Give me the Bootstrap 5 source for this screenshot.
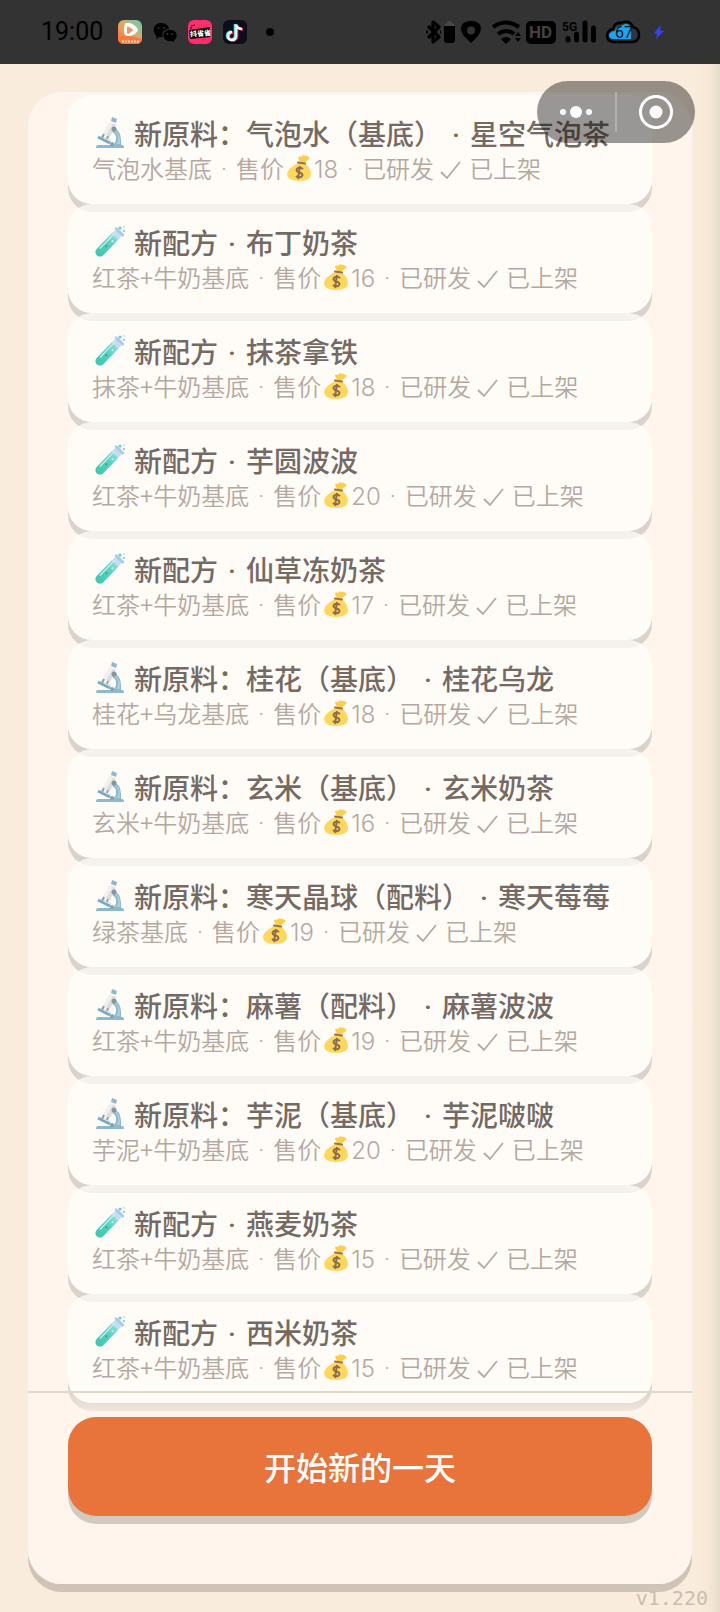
<!DOCTYPE html>
<html lang="zh-CN">
<head>
<meta charset="utf-8">
<meta name="viewport" content="width=device-width, initial-scale=1">
<title>奶茶店</title>
<link rel="stylesheet" href="https://cdn.jsdelivr.net/npm/bootstrap@5.3.0/dist/css/bootstrap.min.css">
<style>
body{background:#faecdc;font-family:"Noto Sans CJK SC",sans-serif;color:#756a63}
.statusbar{background:#333;height:64px;padding:0 55px 0 41px;gap:11px;color:#000}
.clock{font:25px/24px Roboto,sans-serif;width:66px;white-space:nowrap}
.stage{padding:28px;background:linear-gradient(to left,#e6dac8 0,#f3e5d3 8px,#f8e9d8 16px,#faecdc 28px)}
.panel{background:#fff5ec;border-radius:34px;box-shadow:0 8px #cfc3b8}
.recipes{padding:3px 40px 0}
.recipe{background:rgba(255,255,253,.7);border-radius:24px;box-shadow:0 8px #dad2cb;padding:20px 24px 19px;white-space:nowrap}
.recipe h2{font-size:28px;line-height:36px;font-weight:500;gap:8px}
.recipe p{font-size:24px;line-height:34px;height:34px;font-weight:350;color:#b5a8a0}
.dot-lg,.dot-sm{display:inline-block;text-align:center;font-family:Roboto,sans-serif;line-height:1}
.dot-lg{width:28px}
.dot-sm{width:24px}
.price{font-family:Inter,sans-serif;line-height:1}
.bag{width:30px;height:28px;vertical-align:-4px}
.tick{width:35px;height:24px;vertical-align:-4px}
.dock{margin-top:-12px;padding:24px 40px 68px;border-top:2px solid #e3d6cb;background:linear-gradient(rgba(255,245,236,.1),rgba(255,245,236,.6) 20px,#fff5ec 24px);border-radius:0 0 34px 34px}
.start{background:#e8743b;color:#fff;border:0;border-radius:28px;box-shadow:0 8px #d2cac1;font-size:32px;line-height:48px;font-weight:500;padding:25px 0 26px}
.start:hover{background:#e8743b;color:#fff}
.capsule{top:17px;right:25px;width:158px;height:62px;border-radius:31px;background:rgba(0,0,0,.4)}
.capsule button{background:none;border:0;padding:0;width:78px}
.capsule svg{display:block;margin:auto}
.rule{width:2px;height:40px;background:rgba(255,255,255,.25)}
.version{right:12px;bottom:2px;font:20px/24px "DejaVu Sans Mono",monospace;color:#c9beb2}
</style>
</head>
<body>
<svg width="0" height="0" class="position-absolute" aria-hidden="true">
<defs>
<linearGradient id="gl" x2="0" y2="1"><stop stop-color="#83ddd5"/><stop offset=".4" stop-color="#56d0bf"/><stop offset="1" stop-color="#3cc9ac"/></linearGradient>
<symbol id="scope" viewBox="0 0 34 34"><path d="M20 11q9 3 9 13v5h1q2 0 2 3H4q0-3 2-3h12q5 0 6-5 1-6-4-8z" fill="#8cb9cc"/><path d="M22 13q6 4 6 11v4h-4q2-2 2-6 0-5-4-7z" fill="#a9cfdf"/><path d="M6 21l12 6" stroke="#73a9c1" stroke-width="3"/><path d="M8 20l11 5" stroke="#cfe8f0" stroke-width="1.500"/><path d="M18 6l6 3-6 12-7-3z" fill="#dcdddd"/><path d="M18 6l3 1.500-7 12-3-1.500z" fill="#f0f0f0"/><path d="M20 1l5 2-1 4-5-2z" fill="#90b8cb"/><path d="M12 18l-2 4M16 20l-1 3" stroke="#9a9da0" stroke-width="2"/><circle cx="22" cy="13" r="2.500" fill="#8695a0"/><circle cx="20" cy="28" r="2" fill="#8c9ca8"/></symbol>
<symbol id="tube" viewBox="0 0 34 34"><g transform="rotate(44 17 17)"><rect x="13" y="1" width="9" height="34" rx="4.500" fill="#c5dcf3"/><path d="M13 9h9v21.500a4.500 4.500 0 0 1-9 0z" fill="url(#gl)"/><rect x="11.500" y="1" width="12" height="3" rx="1.500" fill="#a7cdec"/><path d="M15 7v21" stroke="#c8f6ea" stroke-width="1.200"/><circle cx="19" cy="14" r="1" fill="#caf5ea"/><circle cx="18" cy="22" r="1" fill="#26a58c"/></g><circle cx="28" cy="3" r="1.500" fill="#66cfc0"/><circle cx="32" cy="6" r="1" fill="#66cfc0"/><circle cx="32" cy="2" r=".8" fill="#89d8cf"/></symbol>
<symbol id="bag" viewBox="0 0 30 28"><path d="M16 8q-2-3-2-5 2-1 3 0 2-3 4-1 2-1 3 1 2-1 1 2l-5 4z" fill="#ffcd48"/><path d="M14 9h7q6 6 6 11 0 7-12 7T3 20q0-5 11-11z" fill="#ffd75b"/><path d="M14 8.500l7 1" stroke="#967555" stroke-width="2" stroke-linecap="round"/><path d="M19 15q-2-2-5-1-3 2 0 4l3 1q3 2 0 4-3 1-5-1M16 12l-2 13" stroke="#8a6d52" stroke-width="2" fill="none"/></symbol>
<symbol id="tick" viewBox="0 0 35 24"><path d="M7 14l6 6L26 4" fill="none" stroke="#b5a8a0" stroke-width="1.800"/></symbol>
</defs>
</svg>

<header class="statusbar d-flex align-items-center">
<span class="clock">19:00</span>
<svg width="24" height="24" viewBox="0 0 24 24"><defs><linearGradient id="o" y2="1" x2="0" x1="1"><stop stop-color="#55d5ba"/><stop offset=".5" stop-color="#e9a565"/><stop offset="1" stop-color="#ff6c28"/></linearGradient></defs><rect width="24" height="24" rx="6" fill="url(#o)"/><path d="M0 17q12-3 24 2v1q-1 4-6 4H6q-6 0-6-6z" fill="#ff793b"/><path d="M8 3h4q7 3 8 7-2 5-9 6-6 0-5-6 0-6 2-7z" fill="#fff"/><path d="M10 7.500l4 2.500-4 3z" fill="#ee9858" stroke="#ee9858" stroke-width="2" stroke-linejoin="round"/><path d="M4 21.500h17" stroke="#ffe3cf" stroke-width="2" stroke-dasharray="2 1"/></svg>
<svg width="24" height="24" viewBox="0 0 24 24"><path d="M8 3c5 0 8 3 8 6-5 0-8 4-6 8l-4 0-3 2 .500-3C-2 11 1 3 8 3zM17 10c8 0 8 8 4 10l.500 2-3-1c-6 1-8-3-8-6s3-5 6.500-5z"/><g fill="#333"><circle cx="5.500" cy="8" r="1"/><circle cx="11" cy="8" r="1"/><circle cx="14.500" cy="14" r="1"/><circle cx="19" cy="14" r="1"/></g></svg>
<svg width="24" height="24" viewBox="0 0 24 24"><rect width="24" height="24" rx="6" fill="#fe2d6c"/><path d="M1 10l21-3v10L2 19z"/><path d="M3 6l4-1M3 9V7" stroke="#111"/><text x="2" y="16" font-size="7" font-weight="900" fill="#fff" transform="rotate(-4 12 13)">抖省省</text></svg>
<svg width="24" height="24" viewBox="0 0 24 24"><rect width="24" height="24" rx="6" fill="#0c0d18"/><g fill="none" stroke-width="2.600"><path d="M12 4v11.500a4 4 0 1 1-4-4M12 4q1 4 6 4.500" stroke="#25e5e0"/><path d="M14 5v11.500a4 4 0 1 1-4-4M14 5q1 4 6 4.500" stroke="#fe2d55"/><path d="M13 4.500v11.500a4 4 0 1 1-4-4M13 4.500q1 4 6 4.500" stroke="#fff"/></g></svg>
<svg width="24" height="24" viewBox="0 0 24 24"><circle cx="12" cy="12" r="4"/></svg>
<svg class="ms-auto" width="240" height="26" viewBox="426 19 240 26" font-family="Roboto,sans-serif">
<path d="M429 26l11 11-6 5V22l6 5-11 11M427 32h2M441 32h1" fill="none" stroke="#000" stroke-width="3.200" stroke-linejoin="round"/>
<path d="M445 26h11v14q0 3-3 3h-5q-3 0-3-3z"/><path d="M445 26q0-2 3-3 0-2 2.500-2t2.500 2q3 1 3 3z" fill="#484848"/>
<path fill-rule="evenodd" d="M472 21c12 0 12 10 6 16l-6 6-6-6c-6-6-6-16 6-16zm0 5.500a4 4 0 1 0 0 8 4 4 0 0 0 0-8z"/>
<g fill="none" stroke="#000" stroke-width="4"><path d="M494 27q13-9 26 0M499 34q8-6 16 0"/></g><path d="M502 39q5-4 10 0l-5 5zM516 36l3-4 3 4zM516 38h6l-3 4z"/>
<rect x="527" y="21" width="30" height="23" rx="5"/><text x="530" y="38" font-size="17" font-weight="700" fill="#444">HD</text>
<text x="563" y="31" font-size="12" font-weight="700">5G</text><g stroke="#000" stroke-width="5" stroke-linecap="round"><path d="M569 38.500v1.500M577.500 34v6M586 23v17M594.500 28v12"/></g>
<path d="M614 42q-6-1-6-7 1-5 6-6 2-7 8-6 8-4 12 4 7 2 6 9-1 6-7 6z" fill="#333" stroke="#000" stroke-width="2.500"/><path d="M614 39q-4-1-4-4 1-4 6-4 1-5 6-5l4-2q6 0 6 5v10z" fill="#17a4fa"/><text x="616" y="38" font-size="16" fill="#111">67</text>
<path d="M662 25l-7 8 3 1-1 5 8-8-4-1z" fill="#3244ed"/>
</svg>
</header>

<main class="stage position-relative">
<section class="panel">
<div class="recipes" id="recipes"></div>
<div class="dock position-relative"><button type="button" class="btn start d-block w-100">开始新的一天</button></div>
</section>
<div class="capsule position-absolute d-flex align-items-center">
<button type="button" aria-label="更多"><svg width="40" height="16" viewBox="0 0 40 16" fill="#fff"><circle cx="7" cy="8" r="3"/><circle cx="20" cy="8" r="6"/><circle cx="33" cy="8" r="3"/></svg></button>
<span class="rule"></span>
<button type="button" aria-label="关闭"><svg width="36" height="36" viewBox="0 0 36 36"><circle cx="18" cy="18" r="15.500" fill="none" stroke="#fff" stroke-width="3"/><circle cx="18" cy="18" r="6.500" fill="#fff"/></svg></button>
</div>
<small class="version position-absolute">v1.220</small>
</main>
<script>
const recipes = [
  ['scope','新原料：气泡水（基底）','星空气泡茶','气泡水基底',18],
  ['tube','新配方','布丁奶茶','红茶+牛奶基底',16],
  ['tube','新配方','抹茶拿铁','抹茶+牛奶基底',18],
  ['tube','新配方','芋圆波波','红茶+牛奶基底',20],
  ['tube','新配方','仙草冻奶茶','红茶+牛奶基底',17],
  ['scope','新原料：桂花（基底）','桂花乌龙','桂花+乌龙基底',18],
  ['scope','新原料：玄米（基底）','玄米奶茶','玄米+牛奶基底',16],
  ['scope','新原料：寒天晶球（配料）','寒天莓莓','绿茶基底',19],
  ['scope','新原料：麻薯（配料）','麻薯波波','红茶+牛奶基底',19],
  ['scope','新原料：芋泥（基底）','芋泥啵啵','芋泥+牛奶基底',20],
  ['tube','新配方','燕麦奶茶','红茶+牛奶基底',15],
  ['tube','新配方','西米奶茶','红茶+牛奶基底',15]
];
document.getElementById('recipes').innerHTML = recipes.map(([icon,kind,name,base,price]) => `
<article class="recipe">
<h2 class="d-flex align-items-center m-0"><svg width="34" height="34"><use href="#${icon}"/></svg><span>${kind}<span class="dot-lg">·</span>${name}</span></h2>
<p class="m-0">${base}<span class="dot-sm">·</span>售价<svg class="bag"><use href="#bag"/></svg><span class="price">${price}</span><span class="dot-sm">·</span>已研发<svg class="tick" role="img" aria-label="✓"><use href="#tick"/></svg>已上架</p>
</article>`).join('');
</script>
<script src="https://cdn.jsdelivr.net/npm/bootstrap@5.3.0/dist/js/bootstrap.bundle.min.js"></script>
</body>
</html>
